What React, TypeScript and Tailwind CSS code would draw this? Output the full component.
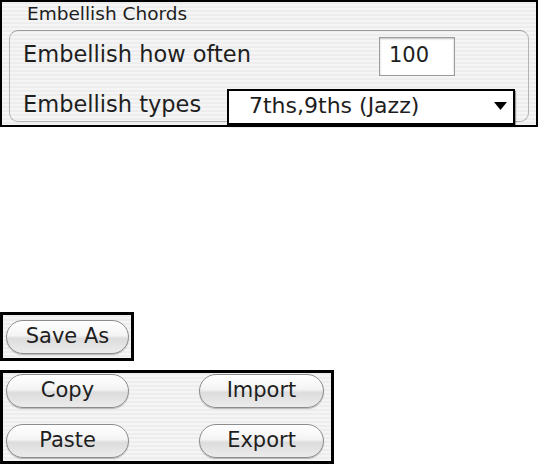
import React from "react";

const stripes =
  "bg-[repeating-linear-gradient(180deg,#ededed_0px,#ededed_2px,#f5f5f5_2px,#f5f5f5_4px)]";

const Pill = ({ label, className = "" }: { label: string; className?: string }) => (
  <button
    className={`h-[34px] w-[123px] rounded-full border border-[#8d8d8d] bg-[linear-gradient(180deg,#ffffff_0%,#f4f4f4_45%,#dcdcdc_55%,#ececec_100%)] shadow-[0_1px_1px_rgba(0,0,0,0.25)] text-[21px] leading-none text-[#1e1e1e] pb-[1px] ${className}`}
  >
    {label}
  </button>
);

export default function App() {
  return (
    <div className="w-[538px] h-[469px] bg-white font-['DejaVu_Sans',sans-serif] text-[#1e1e1e]">
      <div className={`h-[127px] border-2 border-black ${stripes} px-[7px]`}>
        <div className="pl-[18px] text-[18.5px] leading-[24px]">Embellish Chords</div>
        <div className="mt-[4px] h-[92px] rounded-[9px] border border-[#b4b4b4] border-t-[#9a9a9a] pl-[13px] pr-[12px] pt-[6px]">
          <div className="flex items-center justify-between h-[39px]">
            <span className="text-[22.5px] mb-[4px]">Embellish how often</span>
            <div className="mr-[61px] h-[39px] w-[76px] border border-[#9c9c9c] bg-white shadow-[inset_0_1px_2px_rgba(0,0,0,0.25)] pl-[9px] pb-[2px] flex items-center text-[21px]">
              100
            </div>
          </div>
          <div className="mt-[12px] flex items-center justify-between">
            <span className="text-[22.5px] mb-[5px]">Embellish types</span>
            <div className="mr-[1px] h-[36px] w-[288px] border-2 border-black bg-white shadow-[1px_2px_1px_rgba(0,0,0,0.35)] flex items-center justify-between pl-[20px] pr-[6px] pb-[4px] text-[22px]">
              <span>7ths,9ths (Jazz)</span>
              <svg width="13" height="8" viewBox="0 0 13 8" className="mt-[2px]">
                <polygon points="0,0 13,0 6.5,8" fill="#000" />
              </svg>
            </div>
          </div>
        </div>
      </div>

      <div className="h-[185px]" />

      <div className={`w-[134px] h-[49px] border-[3px] border-black ${stripes} flex items-center pl-[3px]`}>
        <Pill label="Save As" />
      </div>

      <div className={`mt-[9px] w-[334px] h-[94px] border-[3px] border-black ${stripes} pl-[3px] pt-[1px] flex flex-col gap-[16px]`}>
        <div className="flex justify-between pr-[7px]">
          <Pill label="Copy" />
          <Pill label="Import" className="w-[125px]" />
        </div>
        <div className="flex justify-between pr-[7px]">
          <Pill label="Paste" />
          <Pill label="Export" className="w-[125px]" />
        </div>
      </div>
    </div>
  );
}
